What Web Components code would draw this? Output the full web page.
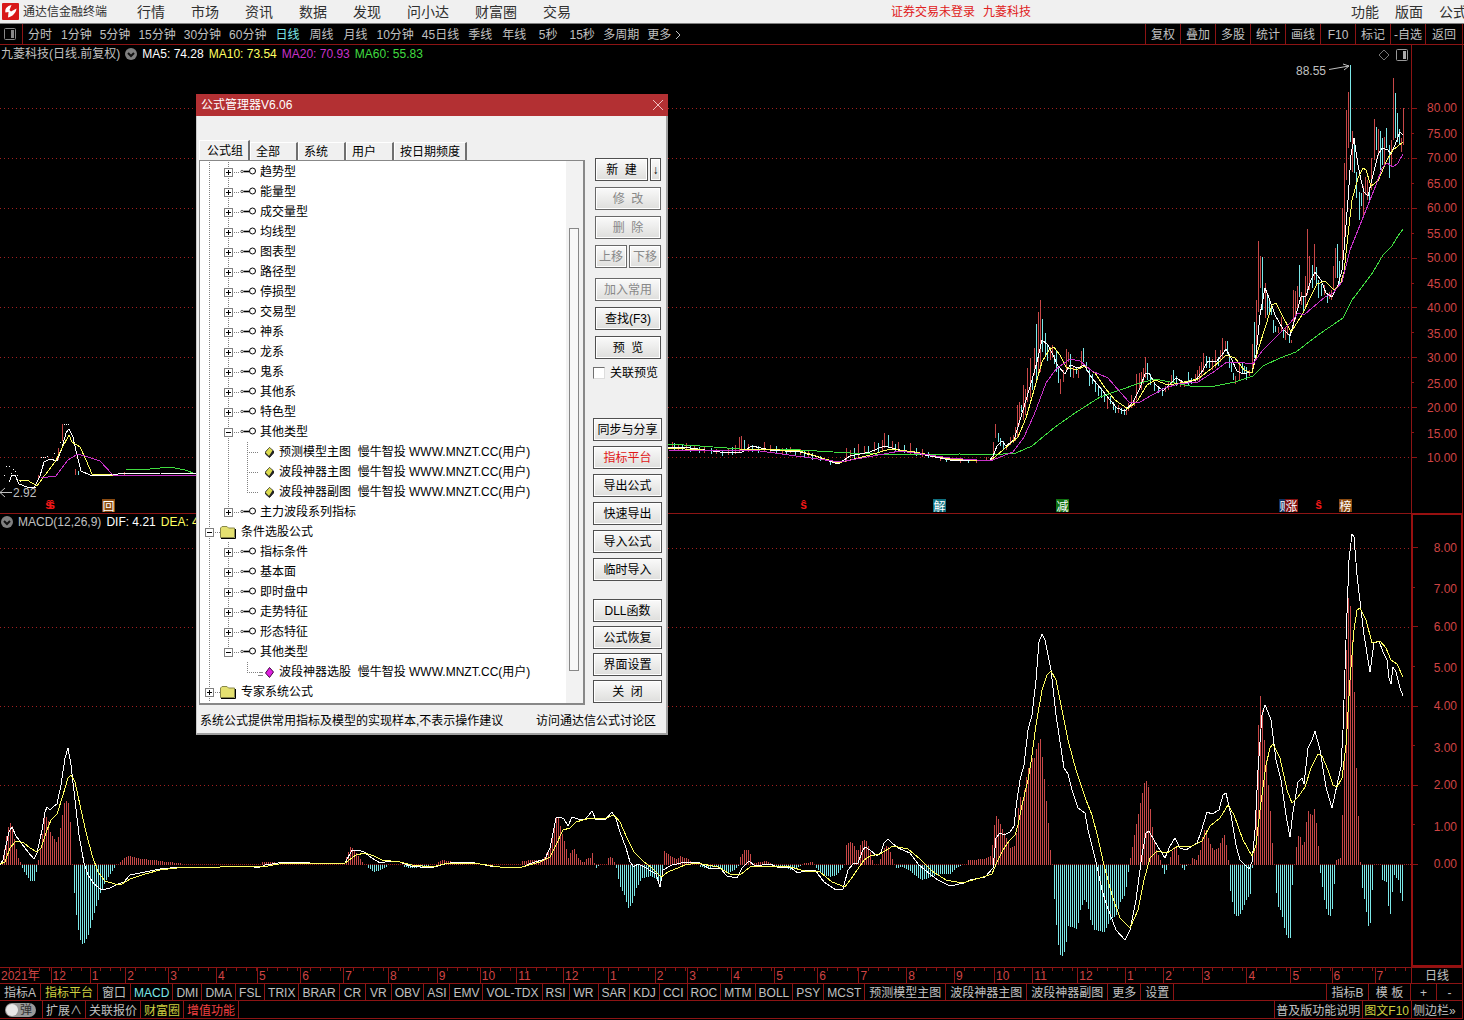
<!DOCTYPE html>
<html lang="zh-CN">
<head>
<meta charset="utf-8">
<title>通达信金融终端</title>
<style>
  html, body { margin: 0; height: 100%; }
  body {
    background: #000;
    color: #c0c0c0;
    font: 12px/16px "Liberation Sans", "Noto Sans CJK SC", sans-serif;
    overflow: hidden;
    --line: #8c1414;
    --red: #d04444;
    --cyan: #7ce8e8;
    --yellow: #ffff60;
    --magenta: #c832c8;
    --green: #40dc40;
  }
</style>
</head>
<body>
<trading-terminal></trading-terminal>

<script>
const RESET = `
  *, *::before, *::after { box-sizing: border-box; }
  :host { box-sizing: border-box; display: block; }
  button { margin: 0; padding: 0; border: 0; background: none; color: inherit; font: inherit; white-space: nowrap; }
  a { color: inherit; text-decoration: none; white-space: nowrap; }
`;

function define(name, render) {
  if (customElements.get(name)) return;
  customElements.define(name, class extends HTMLElement {
    connectedCallback() {
      if (this.shadowRoot) return;
      const root = this.attachShadow({ mode: "open" });
      root.innerHTML = render(this);
    }
  });
}

/* ---------- title bar ---------- */

define("title-bar", () => `
  <style>
    ${RESET}
    :host { display: flex; align-items: center; height: 24px; background: #f0f0f0; color: #303030; border-bottom: 1px solid #808080; overflow: hidden; }
    .logo { width: 17px; height: 17px; margin: 0 4px 0 2px; flex: none; }
    nav { display: flex; font-size: 14px; line-height: 20px; flex: none; }
    nav.main { gap: 26px; margin-left: 30px; }
    nav.side { gap: 16px; margin-right: -3px; }
    .account { display: flex; gap: 8px; margin: 0 auto; color: #e02020; white-space: nowrap; }
    .name { white-space: nowrap; }
  </style>
  <svg class="logo" viewBox="0 0 17 17" aria-hidden="true">
    <rect width="17" height="17" rx="1" fill="#d81818"/>
    <path d="M9.500 2 C5 3 2.500 6 3.500 9.500 L6.500 9 L6 14.500 C10.500 13.500 14 10 14.500 5.500 L9 8.500 L7.500 7 Z" fill="#fff"/>
  </svg>
  <span class="name">通达信金融终端</span>
  <nav class="main">
    ${["行情", "市场", "资讯", "数据", "发现", "问小达", "财富圈", "交易"].map(t => `<a href="#">${t}</a>`).join("")}
  </nav>
  <div class="account"><a href="#">证券交易未登录</a><a href="#">九菱科技</a></div>
  <nav class="side">${["功能", "版面", "公式"].map(t => `<a href="#">${t}</a>`).join("")}</nav>
`);

/* ---------- period bar ---------- */

const PERIODS = ["分时", "1分钟", "5分钟", "15分钟", "30分钟", "60分钟", "日线", "周线", "月线", "10分钟", "45日线", "季线", "年线", "5秒", "15秒", "多周期", "更多"];
const TOOLS = ["复权", "叠加", "多股", "统计", "画线", "F10", "标记", "-自选", "返回"];

define("period-bar", () => `
  <style>
    ${RESET}
    :host { display: flex; height: 21px; border-bottom: 1px solid var(--line); padding-right: 1px; }
    .panel { width: 23px; border-right: 1px solid var(--line); display: flex; align-items: center; justify-content: center; padding-right: 2px; }
    .periods { display: flex; flex: 1; }
    .periods button { min-width: 34px; padding: 1px 4px 0; }
    .periods .on { color: var(--cyan); }
    .periods .more { display: flex; align-items: center; gap: 4px; }
    .tools { display: flex; border-right: 1px solid var(--line); }
    .tools button { width: 35px; padding-top: 1px; border-left: 1px solid var(--line); }
    .tools button:last-child { width: 37px; }
  </style>
  <button class="panel" aria-label="面板">
    <svg width="12" height="12" viewBox="0 0 12 12"><rect x=".5" y=".5" width="11" height="11" rx="1" fill="none" stroke="#888"/><rect x="7" y="2" width="3" height="8" fill="#888"/></svg>
  </button>
  <div class="periods">
    ${PERIODS.map(t => t === "更多"
      ? `<button class="more">更多<svg width="6" height="10" viewBox="0 0 6 10"><path d="M1 1 L5 5 L1 9" fill="none" stroke="#c0c0c0"/></svg></button>`
      : `<button class="${t === "日线" ? "on" : ""}">${t}</button>`).join("")}
  </div>
  <div class="tools">${TOOLS.map(t => `<button>${t}</button>`).join("")}</div>
`);

/* ---------- chart helpers ---------- */

const toPoints = s => s.trim().split(/\s+/).map(p => p.split(",").map(Number));
const line = (s, color) => s.split("|").map(part =>
  `<polyline points="${part.trim()}" fill="none" stroke="${color}" vector-effect="non-scaling-stroke"/>`).join("");
const gridLine = (y, dash = "1 3") =>
  `<path d="M0 ${y}.5 H1411" stroke="#a02020" stroke-dasharray="${dash}" vector-effect="non-scaling-stroke"/>`;

// one bar every two pixels, its end interpolated between the given points
function histogram(s, zero) {
  let up = "", down = "";
  for (const run of s.split("|")) {
    const pts = toPoints(run);
    let i = 0;
    for (let x = Math.ceil(pts[0][0] / 2) * 2; x <= pts[pts.length - 1][0]; x += 2) {
      while (i < pts.length - 2 && pts[i + 1][0] < x) i++;
      const [x0, y0] = pts[i], [x1, y1] = pts[i + 1];
      const y = Math.round(y0 + (y1 - y0) * (x - x0) / (x1 - x0));
      const bar = `M${x}.5 ${zero}V${y}`;
      if (y < zero) up += bar; else down += bar;
    }
  }
  return `<path d="${up}" stroke="#c84848" vector-effect="non-scaling-stroke"/><path d="${down}" stroke="#7ce8e8" vector-effect="non-scaling-stroke"/>`;
}

const CHART_CSS = `
  ${RESET}
  :host { display: grid; min-width: 0; min-height: 0; overflow: hidden; position: relative; }
  .plot { grid-area: 1 / 1; width: 100%; height: 100%; min-height: 0; }
  .legend { grid-area: 1 / 1; align-self: start; display: flex; align-items: center; gap: 5px; padding: 1px; height: 18px; white-space: nowrap; z-index: 1; }
  .legend button { display: flex; }
`;
const DROP = `<button aria-label="展开"><svg width="12" height="12" viewBox="0 0 12 12"><circle cx="6" cy="6" r="6" fill="#808080"/><path d="M3 5 L6 8 L9 5" fill="none" stroke="#111" stroke-width="2"/></svg></button>`;

/* ---------- price chart ---------- */

const MA5 = `9,482 12,475 15,475 19,484 27,487 34,488 40,476 44,462 50,459 57,461 62,448 66,433 69,429 73,437 77,455 81,471 90,475 110,475 127,473 160,473 196,474 |
 668,447 690,448 720,452 740,453 752,446 770,450 800,452 815,456 838,464 850,456 870,452 884,446 900,450 915,453 935,457 950,460 975,461 990,460 993,456 997,446 1002,441 1006,446 1014,440 1020,420 1026,400 1032,380 1037,362 1042,340 1048,345 1053,355 1058,366 1065,374 1070,365 1078,368 1084,365 1092,378 1102,390 1110,400 1117,408 1125,411 1133,402 1140,388 1145,374 1149,373 1155,384 1163,391 1170,384 1176,378 1185,383 1196,380 1203,370 1208,361 1216,362 1222,355 1226,349 1231,358 1237,371 1243,374 1252,372 1256,355 1260,315 1265,288 1269,298 1275,315 1283,329 1290,336 1296,315 1301,297 1306,296 1311,280 1315,272 1321,280 1326,293 1332,297 1338,285 1342,270 1344,250 1348,200 1351,155 1354,138 1358,165 1361,180 1364,192 1368,196 1373,175 1378,155 1382,148 1388,150 1391,154 1395,145 1400,132 1403,135`;
const MA10 = `19,480 27,480 37,486 45,475 55,462 62,448 69,435 72,442 80,447 86,460 92,474 110,475 196,475 |
 668,448 720,451 760,449 800,451 838,463 870,455 890,449 915,452 950,459 990,461 1003,450 1018,437 1026,418 1034,390 1042,362 1049,350 1054,347 1060,355 1066,367 1076,370 1085,366 1095,373 1105,388 1115,400 1128,409 1138,400 1147,385 1155,380 1168,385 1180,383 1198,379 1212,368 1220,361 1226,355 1235,358 1244,370 1252,373 1258,350 1266,325 1272,305 1276,303 1282,315 1291,332 1302,315 1311,296 1317,284 1325,281 1334,290 1340,285 1344,272 1348,235 1352,200 1358,178 1363,168 1366,170 1371,186 1378,181 1387,160 1393,150 1403,142`;
const MA20 = `41,478 48,477 56,476 68,460 78,454 88,457 100,461 113,475 196,475 |
 668,450 760,451 840,462 900,451 950,458 990,461 1013,452 1024,437 1034,415 1046,383 1056,369 1070,359 1080,361 1092,371 1108,378 1120,392 1130,403 1140,402 1152,395 1165,388 1178,384 1198,382 1215,371 1227,362 1245,363 1253,364 1262,351 1278,335 1290,323 1298,313 1304,315 1312,308 1325,297 1333,293 1342,282 1350,250 1356,235 1364,215 1370,200 1376,185 1382,168 1387,163 1393,167 1398,163 1403,154`;
const MA60 = `126,470 150,469 170,467 185,470 196,474 |
 668,444 700,446 740,449 800,450 850,453 900,455 960,454 990,455 1016,453 1032,446 1055,427 1075,413 1100,397 1120,390 1137,384 1155,379 1170,382 1190,386 1215,386 1235,382 1253,376 1263,366 1280,358 1296,352 1318,335 1343,318 1352,300 1362,287 1373,272 1383,255 1392,246 1398,236 1403,229`;

// x,high,low of every candle, grouped by colour
const RISING = `38,475,478 58,448,460 62,424,441 75,469,475 124,472,476 672,442,449 678,445,451 686,443,450 694,446,451 704,447,453 716,449,454 728,449,455 735,445,454 739,437,452 741,436,449 748,444,452 764,442,452 770,445,453 782,448,454 790,447,453 800,449,455 808,451,457 846,448,462 850,450,458 858,444,457 864,446,454 874,442,452 882,440,452 884,433,448 892,441,450 898,442,452 910,443,454 922,449,457 940,456,461 960,459,463 976,459,463 986,457,461
 993,442,457 995,424,438 1006,445,450 1010,437,445 1013,435,443 1015,427,441 1017,405,437 1019,402,425 1023,385,420 1025,389,415 1027,368,402 1030,358,398 1034,348,375 1038,312,372 1040,300,372 1050,347,360 1052,345,358 1060,379,394 1063,370,382 1066,349,370 1068,352,362 1073,366,378 1078,370,378 1081,351,368 1107,398,409 1118,405,413 1126,410,415 1128,403,411 1131,395,408 1134,398,406 1136,374,400 1139,373,390 1141,372,390 1143,368,384 1145,357,378 1165,386,392 1168,382,390 1171,375,386 1180,380,387 1184,382,387 1195,374,383 1197,370,381 1199,366,380 1201,362,376 1203,353,372 1212,359,370 1215,350,368 1220,350,362 1222,338,358 1225,341,350 1235,376,384 1239,364,380 1249,370,376 1252,344,370 1256,300,358 1258,241,312 1260,256,288 1265,283,318 1278,327,333 1281,317,332 1285,328,340 1287,326,335 1291,340,343 1293,290,327 1295,291,320 1297,286,310 1301,292,305 1305,276,308 1307,229,295 1309,256,290 1314,244,280 1324,285,295 1329,292,299 1331,290,300 1333,266,290 1335,248,278 1342,208,260 1344,163,240 1346,110,180 1348,92,148 1352,131,172 1363,186,216 1365,177,195 1367,180,200 1371,158,190 1374,119,160 1378,129,156 1384,137,165 1391,140,167 1393,78,140 1401,138,152 1403,108,145`;
const FALLING = `78,471,475 674,443,450 682,444,451 690,446,452 699,447,453 711,448,454 722,450,456 732,447,455 744,440,451 752,445,452 758,446,453 776,446,454 786,448,454 795,449,455 804,451,457 812,453,460 820,456,461 830,460,465 854,448,458 868,446,454 878,443,453 888,435,448 895,444,451 904,445,453 916,448,456 928,452,458 946,457,462 968,459,463
 998,433,442 1000,438,446 1003,441,450 1021,405,412 1032,380,390 1036,324,380 1042,319,352 1045,333,355 1047,345,361 1054,355,364 1056,350,372 1058,366,383 1070,354,377 1076,368,374 1083,348,362 1086,362,371 1089,370,386 1092,374,384 1095,381,392 1098,386,396 1101,388,398 1104,392,402 1110,396,404 1113,402,410 1115,406,413 1121,408,414 1124,409,415 1147,363,380 1150,374,385 1154,382,391 1158,386,393 1162,388,396 1173,370,382 1176,376,386 1188,372,385 1191,378,384 1206,356,368 1209,357,368 1218,357,366 1227,341,354 1229,357,368 1231,363,372 1233,373,380 1242,363,374 1244,366,374 1246,367,380 1254,322,358 1262,257,310 1267,296,315 1269,300,312 1271,308,315 1273,320,333 1275,326,332 1283,330,338 1289,334,343 1299,265,297 1303,296,313 1312,265,288 1316,267,286 1318,280,298 1321,284,296 1327,293,303 1337,244,278 1339,261,285 1350,65,142 1354,142,173 1356,172,198 1359,192,220 1361,193,206 1369,190,200 1376,127,150 1380,131,170 1382,138,165 1386,128,148 1389,145,178 1395,93,138 1397,113,142 1399,129,145`;
const FLAT = "6,466 9,466 41,457 43,457 45,457 47,456 54,453 60,442 64,424 66,424 68,424 17,475 20,481 23,485 26,486 29,487 32,488 35,487 38,484 4,475 11,473 13,469 15,471";

const candles = (s, color) =>
  `<path d="${toPoints(s).map(([x, h, l]) => `M${x}.5 ${h}V${l}`).join("")}" stroke="${color}" vector-effect="non-scaling-stroke"/>`;

// event marks along the foot of the price chart: x, text, background
const MARKS = [
  [45, "ŝ", ""], [48, "ŝ", ""], [102, "回", "#8a4a10"], [800, "ŝ", ""], [933, "解", "#107080"],
  [1056, "减", "#107010"], [1279, "财", "#103060"], [1285, "涨", "#801010"], [1315, "ŝ", ""], [1339, "榜", "#8a4a10"],
];

define("price-chart", () => `
  <style>
    ${CHART_CSS}
    .ma5 { color: #fff; } .ma10 { color: var(--yellow); } .ma20 { color: var(--magenta); } .ma60 { color: var(--green); }
    .corner { grid-area: 1 / 1; justify-self: end; align-self: start; z-index: 1; display: flex; gap: 6px; padding: 4px 3px; }
    .corner button { display: flex; }
    .mark { position: absolute; bottom: 1px; width: 13px; height: 13px; font: 12px/13px "Noto Sans CJK SC", sans-serif; color: #fff; text-align: center; }
    .mark.s { width: 7px; color: #f01818; font: bold 12px/13px "Liberation Sans", sans-serif; }
    .tag { position: absolute; line-height: 14px; }
    .low { left: .92%; top: 94.3%; }
    .high { left: 91.85%; top: 4%; }
  </style>
  <svg class="plot" viewBox="0 45 1411 468" preserveAspectRatio="none" shape-rendering="crispEdges" aria-hidden="true">
    ${[108, 158, 208, 257, 307, 357, 407, 457].map(y => gridLine(y)).join("")}
    ${candles(RISING, "#c84848")}${candles(FALLING, "#7ce8e8")}
    ${toPoints(FLAT).map(([x, y]) => `<rect x="${x}" y="${y}" width="1" height="1" fill="#fff"/>`).join("")}
    ${line(MA60, "#40dc40")}${line(MA5, "#fff")}${line(MA10, "#ffff60")}${line(MA20, "#c832c8")}
    <g fill="none" stroke="#c0c0c0" shape-rendering="auto">
      <path d="M0 492.5 H12 M5 488 L0 492.5 L5 497"/>
      <path d="M1329 69.5 L1349 66 M1343 64 L1349 66 L1344 70"/>
    </g>
  </svg>
  <div class="legend">
    <span>九菱科技(日线.前复权)</span>${DROP}
    <span class="ma5">MA5: 74.28</span><span class="ma10">MA10: 73.54</span><span class="ma20">MA20: 70.93</span><span class="ma60">MA60: 55.83</span>
  </div>
  <div class="corner">
    <button aria-label="标记"><svg width="12" height="12" viewBox="0 0 12 12"><path d="M6 1 L11 6 L6 11 L1 6 Z" fill="none" stroke="#777"/></svg></button>
    <button aria-label="侧栏"><svg width="12" height="12" viewBox="0 0 12 12"><rect x=".5" y=".5" width="11" height="11" rx="1" fill="none" stroke="#999"/><rect x="7" y="2" width="3" height="8" fill="#aaa"/></svg></button>
  </div>
  <span class="tag high">88.55</span>
  <span class="tag low">2.92</span>
  ${MARKS.map(([x, t, bg]) => `<span class="mark ${bg ? "" : "s"}" style="left:${(x / 14.11).toFixed(2)}%;background:${bg || "none"}">${t}</span>`).join("")}
`);

/* ---------- MACD chart ---------- */

const DIF = `0,865 3,860 6,845 9,832 12,827 16,836 22,844 28,852 34,859 37,853 42,830 45,812 47,807 50,810 54,806 57,804 61,785 65,758 68,748 71,765 75,800 79,835 84,863 88,875 94,884 102,890 110,888 118,884 124,882 130,875 145,872 160,869 180,867 220,867 250,866 258,868 265,865 285,862 310,863 330,864 345,863 352,850 358,850 364,852 372,858 380,863 390,861 400,862 410,866 430,868 445,864 455,862 475,863 490,866 500,867 520,868 532,863 545,859 550,848 556,818 560,817 564,819 568,826 572,817 578,819 584,820 588,816 592,811 596,820 606,819 612,812 616,819 620,832 626,848 630,862 634,867 638,864 646,868 656,874 660,887 663,870 672,865 686,862 700,863 708,868 720,868 727,876 737,878 742,868 749,861 755,866 770,864 780,868 790,867 798,873 808,870 815,870 824,882 836,890 843,889 848,870 853,864 858,863 862,852 865,847 870,850 877,856 881,852 884,843 888,839 892,843 898,848 910,853 918,864 926,871 938,880 950,886 964,883 970,880 985,877 993,868 996,838 1000,833 1004,835 1010,832 1014,826 1017,800 1020,780 1024,765 1028,730 1032,715 1036,680 1039,642 1042,634 1045,640 1051,670 1056,715 1064,768 1068,774 1072,790 1078,808 1085,813 1088,830 1096,862 1102,890 1107,906 1116,930 1125,940 1130,930 1136,900 1142,855 1146,833 1149,831 1155,842 1160,850 1165,858 1170,846 1175,838 1180,848 1186,850 1197,843 1201,832 1207,812 1212,814 1219,810 1223,795 1226,793 1231,815 1236,845 1240,860 1249,869 1252,862 1255,830 1258,770 1262,715 1265,705 1268,712 1271,720 1276,760 1281,780 1286,815 1290,837 1293,812 1298,782 1302,778 1304,784 1308,748 1312,740 1315,731 1320,750 1326,787 1332,808 1337,785 1341,767 1343,730 1346,640 1349,560 1352,534 1354,537 1357,575 1361,610 1364,635 1370,672 1374,643 1379,641 1383,652 1387,660 1389,678 1391,684 1393,667 1396,672 1400,688 1403,696`;
const DEA = `0,864 5,862 10,848 16,841 24,843 30,848 37,852 41,848 47,830 51,820 57,814 63,795 68,778 71,775 75,782 80,805 86,832 92,855 98,872 105,881 115,884 122,884 130,879 145,874 160,870 185,867 220,867 250,866 262,867 285,863 310,863 345,863 356,855 365,853 374,856 382,860 400,862 412,865 432,867 448,863 480,864 500,867 522,867 540,862 550,857 556,845 563,830 570,828 576,822 590,818 606,818 614,815 620,822 627,838 634,852 643,861 652,868 661,877 668,872 685,865 697,863 718,867 730,874 740,875 750,867 770,866 790,867 805,871 820,872 832,882 845,887 853,876 864,860 870,856 880,854 893,846 908,849 920,859 932,871 946,880 962,883 980,878 992,874 997,862 1003,850 1009,841 1015,835 1018,825 1022,805 1028,780 1031,762 1036,725 1042,690 1047,675 1051,671 1056,680 1062,710 1068,740 1076,770 1086,800 1092,815 1098,838 1104,865 1112,895 1120,918 1130,928 1138,910 1144,880 1150,858 1157,851 1167,853 1178,846 1190,847 1202,841 1210,826 1220,818 1228,805 1234,815 1243,840 1252,856 1256,845 1260,810 1266,765 1270,748 1273,744 1280,758 1287,790 1292,803 1298,797 1305,787 1311,768 1318,754 1322,756 1328,770 1333,785 1337,787 1342,778 1346,745 1350,680 1354,630 1357,610 1360,608 1366,620 1372,643 1380,641 1386,648 1391,660 1397,664 1403,677`;
const MACD = `2,862 6,836 9,822 12,826 15,845 18,858 20,862 | 22,868 26,875 30,881 34,881 37,868 | 38,860 41,842 44,818 47,816 50,832 53,838 56,842 59,835 62,815 64,803 67,800 69,805 71,838 | 73,878 75,908 78,930 81,945 84,943 88,935 92,920 96,906 100,893 105,882 110,874 115,866 |
 120,862 125,857 130,856 140,859 155,860 165,862 180,863 | 262,862 275,862 | 345,860 350,847 353,848 358,856 363,863 | 368,868 374,872 380,870 387,866 | 403,867 412,868 428,866 | 437,862 442,860 455,862 462,863 |
 522,861 530,860 542,860 548,850 552,835 555,818 558,817 561,830 565,845 568,858 571,850 574,849 578,858 583,863 587,858 590,858 592,853 594,863 | 596,868 598,866 | 608,858 611,856 614,862 | 616,868 619,885 624,895 628,908 632,903 636,888 642,878 650,876 658,880 661,888 663,866 |
 664,851 670,856 676,859 680,856 688,859 692,863 | 700,867 708,868 716,866 722,870 728,873 734,870 738,866 | 740,857 744,850 749,850 752,863 760,862 767,861 771,863 | 773,867 782,866 790,870 796,868 801,866 | 804,863 812,862 | 815,867 822,874 830,877 836,875 842,868 |
 846,845 851,841 855,848 857,852 861,842 865,839 869,848 872,860 | 879,862 884,848 887,845 890,852 893,862 | 895,868 903,867 910,871 918,878 922,880 930,877 940,874 950,874 956,868 962,865 |
 968,860 984,859 990,856 992,845 995,815 998,819 1003,831 1010,848 1015,845 1019,796 1022,800 1024,790 1027,770 1032,758 1034,758 1037,745 1040,739 1042,757 1045,790 1048,823 1050,850 |
 1053,888 1055,910 1057,940 1060,955 1063,957 1066,942 1068,926 1077,929 1080,910 1084,900 1087,903 1090,920 1094,930 1104,932 1110,920 1116,915 1120,902 1125,895 1128,872 |
 1130,858 1136,824 1141,798 1145,778 1148,787 1151,820 1155,847 1159,858 1161,862 | 1162,868 1164,874 1167,868 | 1169,860 1173,848 1176,846 1179,860 | 1182,868 1183,872 1186,866 | 1192,858 1196,860 1200,850 1203,830 1206,830 1209,842 1213,850 1218,848 1222,838 1224,835 1226,845 1228,860 |
 1229,885 1234,914 1237,917 1241,913 1246,900 1251,893 1252,868 | 1254,848 1256,800 1258,725 1260,696 1262,710 1264,740 1266,760 1268,785 1271,824 1273,862 | 1275,880 1277,905 1281,912 1284,928 1287,938 1290,938 1292,885 |
 1295,858 1297,835 1301,838 1303,852 1307,812 1309,810 1311,818 1314,809 1317,830 1319,862 | 1320,873 1324,900 1327,914 1331,917 1333,900 1335,868 | 1336,860 1340,858 1342,815 1344,760 1346,650 1348,598 1350,606 1352,640 1354,692 1356,768 1359,840 1360,862 |
 1361,882 1365,905 1369,933 1371,913 1373,866 | 1382,880 1386,882 1389,918 1391,910 1393,874 1398,880 1401,900 1403,902`;

define("macd-chart", () => `
  <style>
    ${CHART_CSS}
    :host { border-top: 1px solid var(--line); }
    .legend { padding-top: 0; height: 16px; }
    .dif { color: #fff; } .dea { color: var(--yellow); }
  </style>
  <svg class="plot" viewBox="0 514 1411 453" preserveAspectRatio="none" shape-rendering="crispEdges" aria-hidden="true">
    ${[548, 627, 706, 785].map(y => gridLine(y)).join("")}${gridLine(864, "1 1")}
    ${histogram(MACD, 865)}
    ${line(DIF, "#fff")}${line(DEA, "#ffff60")}
  </svg>
  <div class="legend">${DROP}<span>MACD(12,26,9)</span><span class="dif">DIF: 4.21</span><span class="dea">DEA: 4.48</span></div>
`);

/* ---------- value axis ---------- */

define("value-axis", host => {
  const [from, to, step] = host.getAttribute("scale").split(" ").map(Number);
  const rows = [];
  for (let v = from; v >= to; v -= step) rows.push(v);
  return `
  <style>
    ${RESET}
    :host { display: flex; flex-direction: column; color: var(--red); border: 1px solid var(--line); border-width: 0 1px; padding: 51px 0 43px; }
    :host([boxed]) { border: 2px solid #981010; padding: 13px 0 81px; }
    div { flex: 1; display: flex; align-items: center; justify-content: space-between; padding-right: 5px; }
    div::before { content: ""; width: 5px; height: 1px; background: var(--line); }
    :host([boxed]) div { padding-right: 4px; }
    .minor::before { width: 2px; }
    .minor span { padding-top: 2px; }
    :host([boxed]) .minor span { padding-top: 4px; }
  </style>
  ${rows.map((v, i) => `<div class="${i % 2 ? "minor" : ""}"><span>${v.toFixed(2)}</span></div>`).join("")}`;
});

/* ---------- time axis ---------- */

// label and relative length of each month
const MONTHS = [["2021年", 52], ["12", 39], ["1", 35], ["2", 43], ["3", 48], ["4", 41], ["5", 43], ["6", 43], ["7", 45], ["8", 49], ["9", 43], ["10", 36], ["11", 47], ["12", 45], ["1", 47], ["2", 32], ["3", 44], ["4", 43], ["5", 43], ["6", 41], ["7", 48], ["8", 48], ["9", 40], ["10", 38], ["11", 45], ["12", 48], ["1", 38], ["2", 38], ["3", 45], ["4", 44], ["5", 41], ["6", 43], ["7", 36]];

define("time-axis", () => `
  <style>
    ${RESET}
    :host { display: flex; height: 17px; border: 1px solid var(--line); border-left: 0; margin-right: 1px; color: var(--red); line-height: 16px; }
    ol { flex: 1; display: flex; margin: 0; padding: 0; list-style: none; min-width: 0; }
    li { min-width: 0; padding-left: 1px; border-left: 1px solid var(--line); white-space: nowrap;
      background: repeating-linear-gradient(to right, transparent 0 9px, var(--line) 9px 10px) 0 0 / 100% 3px no-repeat; }
    li:first-child { border-left: 0; }
    button { width: 51px; border-left: 1px solid var(--line); color: #c0c0c0; }
  </style>
  <ol>${MONTHS.map(([t, w]) => `<li style="flex:${w} 1 0">${t}</li>`).join("")}</ol>
  <button>日线</button>
`);

/* ---------- indicator tabs ---------- */

const INDICATORS = ["指标A", "指标平台", "窗口", "MACD", "DMI", "DMA", "FSL", "TRIX", "BRAR", "CR", "VR", "OBV", "ASI", "EMV", "VOL-TDX", "RSI", "WR", "SAR", "KDJ", "CCI", "ROC", "MTM", "BOLL", "PSY", "MCST", "预测模型主图", "波段神器主图", "波段神器副图", "更多", "设置"];

define("indicator-tabs", () => `
  <style>
    ${RESET}
    :host { display: flex; height: 17px; border-right: 1px solid var(--line); border-bottom: 1px solid var(--line); margin-right: 1px; }
    .tabs { display: flex; flex: 1; }
    button { border-right: 1px solid var(--line); }
    .tabs button { padding: 1px 4px 0; }
    .tabs .latin { padding: 1px 3px 0; }
    .on { color: var(--cyan); }
    .hot { color: #d0d040; }
    .side { display: flex; }
    .side button { border: 0; border-left: 1px solid var(--line); padding: 1px 0 0; width: 42px; }
    .side .zoom { width: 26px; }
  </style>
  <div class="tabs">
    ${INDICATORS.map(t => {
      const cls = [t === "MACD" && "on", t === "指标平台" && "hot", /^[A-Z-]{3,}$/.test(t) && "latin"].filter(Boolean);
      return `<button class="${cls.join(" ")}">${t}</button>`;
    }).join("")}
  </div>
  <div class="side"><button>指标B</button><button>模 板</button><button class="zoom">+</button><button class="zoom">-</button></div>
`);

/* ---------- status bar ---------- */

define("status-bar", () => `
  <style>
    ${RESET}
    :host { display: flex; height: 18px; border-right: 1px solid var(--line); border-bottom: 1px solid var(--line); margin: 0 1px 1px 0; }
    label { width: 43px; padding-left: 5px; display: flex; align-items: center; border-right: 1px solid var(--line); position: relative; }
    input { appearance: none; margin: 0; width: 31px; height: 14px; border-radius: 7px; background: #999; }
    input::before { content: ""; display: block; width: 12px; height: 12px; margin: 1px; border-radius: 50%; background: #e8e8e8; }
    label span { position: absolute; left: 20px; color: #303030; }
    button { padding: 2px 3px 0; border-right: 1px solid var(--line); }
    .right { margin-left: auto; display: flex; }
    .right button { padding: 2px 2px 0 1px; border-right: 0; border-left: 1px solid var(--line); }
    .right .side { width: 51px; text-align: left; }
    .hot { color: #d0d040; }
    .vip { color: #f04040; }
  </style>
  <label><input type="checkbox"><span>弹</span></label>
  <button>扩展∧</button><button>关联报价</button><button class="hot">财富圈</button><button class="vip">增值功能</button>
  <div class="right"><button>普及版功能说明</button><button class="hot">图文F10</button><button class="side">侧边栏»</button></div>
`);

/* ---------- formula dialog ---------- */

define("push-button", host => `
  <style>
    ${RESET}
    :host { display: flex; height: 23px; }
    button { flex: 1; border: 1px solid #505050; outline: 1px solid #fff; outline-offset: -2px; color: #000;
      background: linear-gradient(#fafafa, #dededc); white-space: pre; }
    button:disabled { color: #888; border-color: #686868; }
    :host([hot]) button { color: #e01818; }
  </style>
  <button ${host.hasAttribute("off") ? "disabled" : ""}><slot></slot></button>
`);

const GLYPHS = {
  link: `<g stroke="#000" fill="#fff"><circle cx="41" cy="9.5" r="1.2" stroke="#555"/><path d="M42.500 9.5 H48.500" stroke-width="1.6"/><circle cx="51.5" cy="9" r="3"/></g>`,
  folder: `<path d="M19.5 15.5 V6 L21 4.5 H26 L27.5 6 H33.5 V15.5 Z" fill="#e4e070" stroke="#88884c"/><path d="M20 16.5 H34.5 V7" fill="none" stroke="#000"/>`,
  yellow: `<path d="M68.5 5.5 L72.5 9 V11 L68.5 15.5 L64.5 12 V10 Z" fill="#222" stroke="#222"/><path d="M68.5 5.500 L71.500 8.500 L68 14 L64.500 10.5 Z" fill="#dcdc50"/>`,
  purple: `<path d="M58 10.5 H62 M57 13.5 H62" stroke="#888"/><path d="M68.5 5.5 L72.5 10 L68.5 15.5 L64.5 11 Z" fill="#e020e0" stroke="#400040"/>`,
};

// depth sets the indent; "trunk" lists which ancestor lines run through the row, "last" ends the row's own line
define("tree-row", host => {
  const depth = Number(host.getAttribute("depth"));
  const x = 8 + depth * 19;
  const sign = host.getAttribute("sign");
  const icon = host.getAttribute("icon");
  const trunks = (host.getAttribute("trunk") || "").split(" ").filter(Boolean).map(Number);
  const end = host.hasAttribute("last") ? 10 : 20;
  const width = [37, 56, 75][depth];
  return `
  <style>
    ${RESET}
    :host { display: flex; align-items: center; height: 20px; color: #000; white-space: pre; }
    svg { flex: none; margin-right: 3px; }
  </style>
  <svg width="${width}" height="20" viewBox="0 0 ${width} 20" shape-rendering="crispEdges" aria-hidden="true">
    <g stroke="#808080" stroke-dasharray="1 1">
      ${trunks.map(t => `<path d="M${8 + t * 19}.5 0V20"/>`).join("")}
      <path d="M${x}.5 0V${end}M${x} 10.5h${depth === 2 ? 12 : 11}"/>
    </g>
    ${sign ? `<rect x="${x - 3.5}" y="6.5" width="8" height="8" fill="#fff" stroke="#808080"/><path d="M${x - 1} 10.5h5${sign === "+" ? `M${x + 1}.5 8v5` : ""}" transform="translate(-1)" stroke="#000"/>` : ""}
    <g shape-rendering="auto">${GLYPHS[icon]}</g>
  </svg>
  <span><slot></slot></span>`;
});

const group = (name, sign = "+", more = "") => `<tree-row role="treeitem" depth="1" trunk="0" sign="${sign}" icon="link" ${more}>${name}</tree-row>`;
const formula = (name, icon, trunk, more = "") => `<tree-row role="treeitem" depth="2" trunk="${trunk}" icon="${icon}" ${more}>${name}  慢牛智投 WWW.MNZT.CC(用户)</tree-row>`;
const folder = (name, sign) => `<tree-row role="treeitem" depth="0" sign="${sign}" icon="folder">${name}</tree-row>`;

define("formula-dialog", () => `
  <style>
    ${RESET}
    :host { display: flex; flex-direction: column; width: 472px; background: #f0f0f0; color: #000; border: 1px solid #c8c8c8; border-width: 0 2px 2px 1px; border-right-color: #a0a0a0; border-bottom-color: #a0a0a0; }
    header { display: flex; align-items: center; justify-content: space-between; height: 22px; margin: 0 -2px 0 -1px; padding: 0 5px; background: #b33033; color: #fff; }
    header button { display: flex; }
    .body { display: flex; padding: 24px 4px 0 2px; gap: 8px; }
    .left { flex: 1; min-width: 0; }
    .tabs { display: flex; align-items: flex-end; height: 20px; }
    .tabs button { height: 18px; min-width: 48px; padding: 1px 5px 0; text-align: left; border: solid; border-width: 1px 2px 0 1px; border-color: #fff #707070 #fff #fff; }
    .tabs .on { height: 20px; padding: 0 5px 0 7px; }
    .tree { display: flex; height: 545px; border: 1px solid #888; border-right-width: 2px; border-bottom-width: 2px; background: #fff; }
    .rows { flex: 1; min-width: 0; padding: 1px 0 0 1px; overflow: hidden; }
    .scroll { width: 17px; background: #f2f2f2; padding: 67px 4px 32px 3px; display: flex; }
    .scroll i { flex: 1; border: 1px solid #888; background: #f8f8f8; }
    .right { width: 69px; padding-top: 18px; }
    .set { display: flex; flex-direction: column; gap: 6px; padding: 0 1px 0 2px; }
    .set + .set { margin-top: 10px; }
    .set.wide { gap: 5px; padding: 0; }
    .set.tight { gap: 4px; padding: 0; margin-top: 18px; }
    .pair { display: flex; gap: 2px; }
    .pair > * { flex: 1; }
    .pair .more { flex: 0 0 11px; }
    label { display: flex; align-items: center; gap: 5px; margin: 6px 0 37px; height: 16px; white-space: nowrap; }
    input { appearance: none; width: 12px; height: 12px; margin: 0; flex: none; background: #fff; border: 1px solid #707070; border-right-color: #ddd; border-bottom-color: #ddd; }
    footer { display: flex; justify-content: space-between; padding: 8px 10px 4px 3px; white-space: nowrap; }
  </style>
  <header>
    <span>公式管理器V6.06</span>
    <button aria-label="关闭"><svg width="10" height="10" viewBox="0 0 10 10"><path d="M0 0 L10 10 M10 0 L0 10" stroke="#f0c0c0"/></svg></button>
  </header>
  <div class="body">
    <div class="left">
      <div class="tabs" role="tablist">
        <button class="on" role="tab">公式组</button><button role="tab">全部</button><button role="tab">系统</button><button role="tab">用户</button><button role="tab">按日期频度</button>
      </div>
      <div class="tree">
        <div class="rows" role="tree">
          ${["趋势型", "能量型", "成交量型", "均线型", "图表型", "路径型", "停损型", "交易型", "神系", "龙系", "鬼系", "其他系", "特色型"].map(t => group(t)).join("")}
          ${group("其他类型", "-")}
          ${formula("预测模型主图", "yellow", "0 1")}${formula("波段神器主图", "yellow", "0 1")}${formula("波段神器副图", "yellow", "0 1", "last")}
          ${group("主力波段系列指标", "+", "last")}
          ${folder("条件选股公式", "-")}
          ${["指标条件", "基本面", "即时盘中", "走势特征", "形态特征"].map(t => group(t)).join("")}
          ${group("其他类型", "-", "last")}
          ${formula("波段神器选股", "purple", "0", "last")}
          ${folder("专家系统公式", "+")}
        </div>
        <div class="scroll"><i></i></div>
      </div>
    </div>
    <div class="right">
      <div class="set">
        <div class="pair"><push-button>新  建</push-button><push-button class="more" aria-label="更多">↓</push-button></div>
        <push-button off>修  改</push-button>
        <push-button off>删  除</push-button>
        <div class="pair"><push-button off>上移</push-button><push-button off>下移</push-button></div>
      </div>
      <div class="set">
        <push-button off>加入常用</push-button>
        <push-button>查找(F3)</push-button>
        <push-button>预  览</push-button>
      </div>
      <label><input type="checkbox">关联预览</label>
      <div class="set wide">
        <push-button>同步与分享</push-button><push-button hot>指标平台</push-button><push-button>导出公式</push-button>
        <push-button>快速导出</push-button><push-button>导入公式</push-button><push-button>临时导入</push-button>
      </div>
      <div class="set tight">
        <push-button>DLL函数</push-button><push-button>公式恢复</push-button><push-button>界面设置</push-button><push-button>关  闭</push-button>
      </div>
    </div>
  </div>
  <footer><span>系统公式提供常用指标及模型的实现样本,不表示操作建议</span><a href="#">访问通达信公式讨论区</a></footer>
`);

/* ---------- page ---------- */

define("trading-terminal", () => `
  <style>
    ${RESET}
    :host { display: flex; flex-direction: column; height: 100vh; position: relative; overflow: hidden; }
    .charts { flex: 1; min-height: 0; margin-right: 1px; display: grid; grid-template: 468fr 454fr / minmax(0, 1fr) 52px; }
    formula-dialog { position: absolute; left: 196px; top: 94px; z-index: 2; }
  </style>
  <title-bar></title-bar>
  <period-bar></period-bar>
  <div class="charts">
    <price-chart></price-chart>
    <value-axis scale="80 10 5"></value-axis>
    <macd-chart></macd-chart>
    <value-axis boxed scale="8 0 1"></value-axis>
  </div>
  <time-axis></time-axis>
  <indicator-tabs></indicator-tabs>
  <status-bar></status-bar>
  <formula-dialog></formula-dialog>
`);
</script>
</body>
</html>
